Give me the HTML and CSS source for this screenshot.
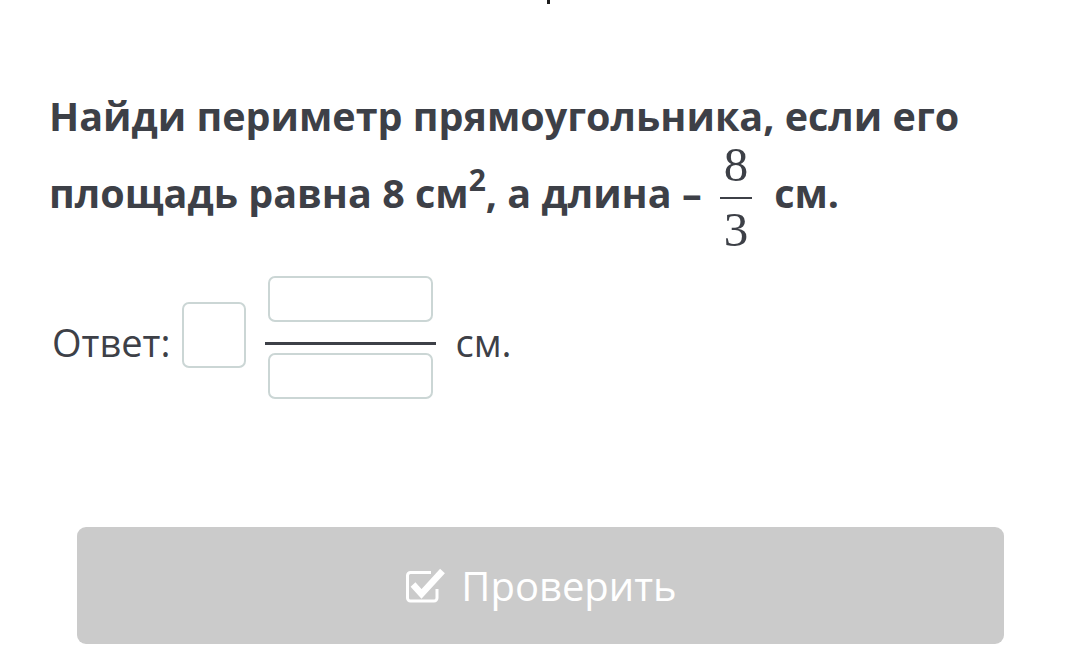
FILE: index.html
```html
<!DOCTYPE html>
<html lang="ru">

<head>
    <meta charset="UTF-8">
    <meta name="viewport" content="width=device-width, initial-scale=1.0">
    <title>Задание</title>
    <link rel="stylesheet" href="styles.css">
</head>

<body>
    <div class="top-cut"><span class="top-mark"></span></div>

    <div class="task">
        <h1 class="question">
            Найди периметр прямоугольника, если его площадь равна 8&nbsp;см<sup>2</sup>, а длина –
            <span class="frac">
                <span class="frac-num">8</span>
                <span class="frac-bar"></span>
                <span class="frac-den">3</span>
            </span>
            см.
        </h1>

        <div class="answer">
            <span class="answer-label">Ответ:</span>
            <input class="box box-whole" type="text">
            <div class="answer-frac">
                <input class="box box-part" type="text">
                <span class="answer-bar"></span>
                <input class="box box-part" type="text">
            </div>
            <span class="answer-unit">см.</span>
        </div>
    </div>

    <button class="check-btn" disabled>
        <svg class="check-icon" width="42" height="36" viewBox="0 0 42 36">
            <path d="M27 4.5 H6.5 a3 3 0 0 0 -3 3 V30 a3 3 0 0 0 3 3 H30 a3 3 0 0 0 3 -3 V21" fill="none" stroke="#fff" stroke-width="3"/>
            <path d="M9 16.5 L17.5 26 L38.5 3" fill="none" stroke="#fff" stroke-width="6.5"/>
        </svg>
        Проверить
    </button>
</body>

</html>
```

FILE: styles.css
```css
body {
    margin: 0;
    background-color: #ffffff;
    font-family: "Open Sans", "Noto Sans", sans-serif;
    color: #3d4047;
}

.top-cut {
    height: 4px;
    display: flex;
    justify-content: center;
}

.top-mark {
    width: 3px;
    height: 4px;
    margin-left: 16px;
    background-color: #1d1d1d;
}

.task {
    padding-left: 49px;
}

.question {
    margin: 82px 0 0 0;
    max-width: 930px;
    font-size: 39.5px;
    font-weight: 700;
    line-height: 60px;
}

.question sup {
    font-size: 30px;
    line-height: 0;
    vertical-align: 17px;
}

.frac {
    display: inline-flex;
    flex-direction: column;
    align-items: center;
    vertical-align: middle;
    margin: 0 12px 0 8px;
    font-family: "Liberation Serif", "DejaVu Serif", serif;
    font-weight: 400;
    font-size: 49px;
    line-height: 38px;
}

.frac-bar {
    width: 32px;
    height: 2px;
    margin: 13px 0 12px 0;
    background-color: #3d4047;
}

.answer {
    display: flex;
    align-items: center;
    margin: 27px 0 0 3px;
    font-size: 38px;
}

.answer-label {
    margin-right: 12px;
    padding-top: 8px;
}

.box {
    box-sizing: border-box;
    border: 2px solid #cbd6d5;
    border-radius: 7px;
    background: #ffffff;
    outline: none;
}

.box-whole {
    width: 64px;
    height: 66px;
    margin-top: -6px;
}

.answer-frac {
    display: flex;
    flex-direction: column;
    align-items: center;
    width: 171px;
    margin: 0 19px;
}

.box-part {
    width: 165px;
    height: 46px;
}

.answer-bar {
    width: 171px;
    height: 3px;
    margin: 20px 0 8px 0;
    background-color: #3d4047;
}

.answer-unit {
    padding-top: 8px;
}

.check-btn {
    display: flex;
    align-items: center;
    justify-content: center;
    gap: 15px;
    width: 927px;
    height: 117px;
    margin: 128px 0 0 77px;
    border: none;
    border-radius: 9px;
    background-color: #cbcbcb;
    color: #ffffff;
    font-family: "Open Sans", "Noto Sans", sans-serif;
    font-size: 40px;
}
```
